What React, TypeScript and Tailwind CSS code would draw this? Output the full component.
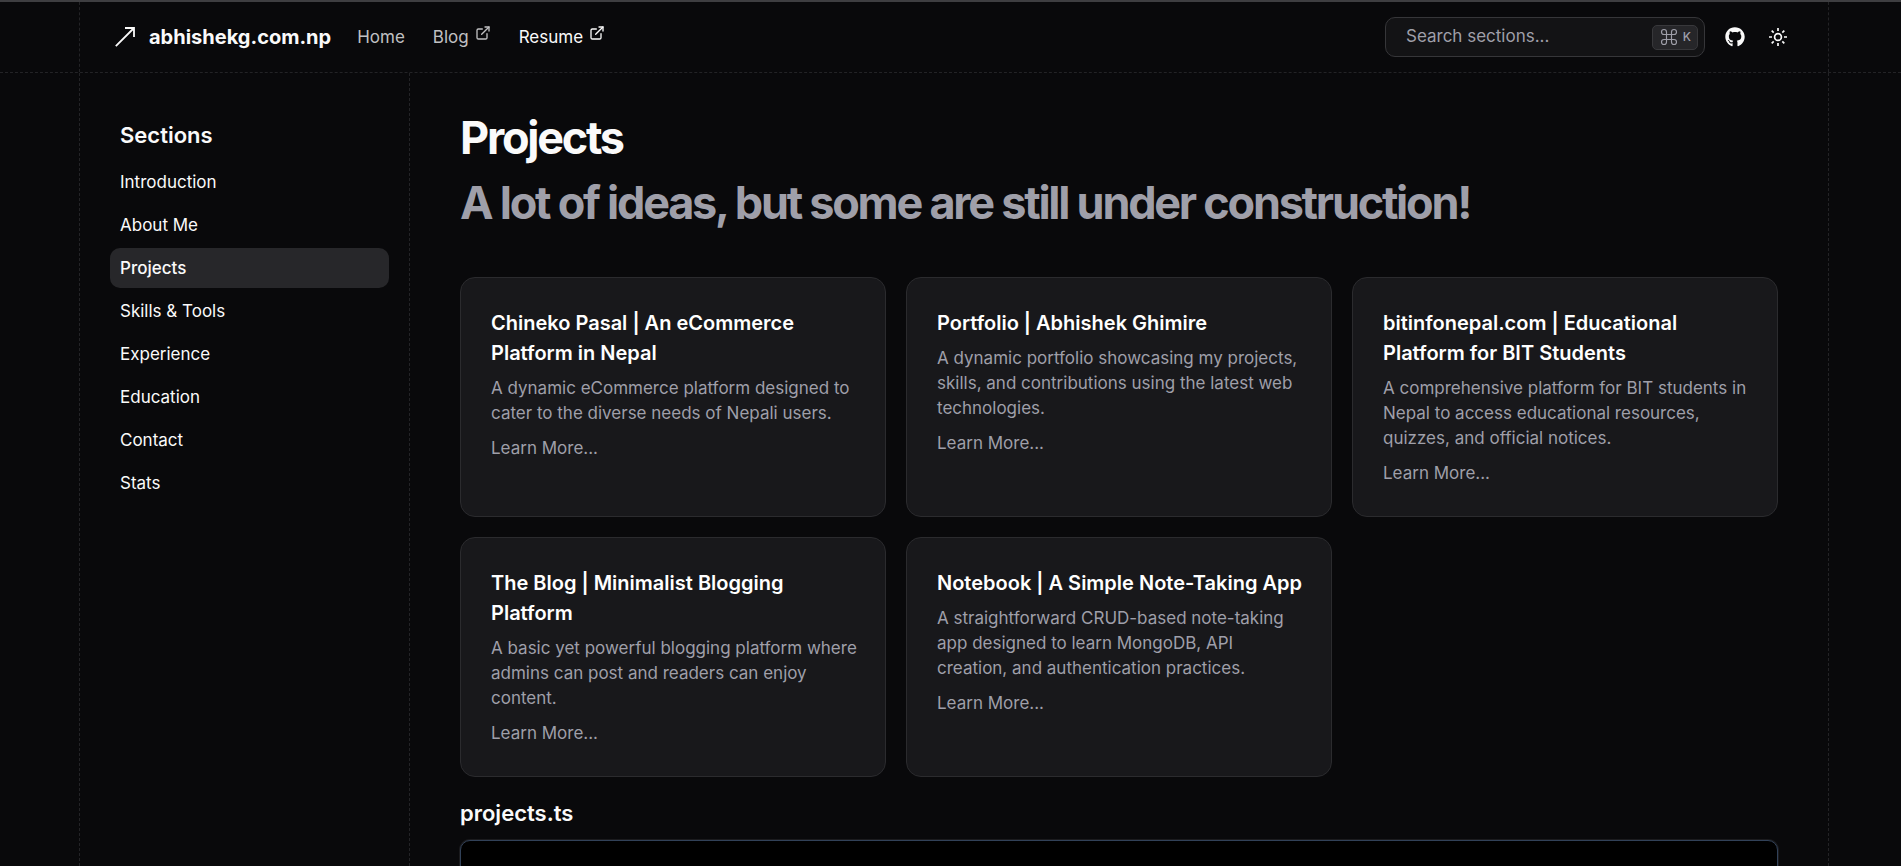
import { LuExternalLink } from "react-icons/lu";
import { FaGithub } from "react-icons/fa";
import { Command } from "lucide-react";

const sections = ["Introduction", "About Me", "Projects", "Skills & Tools", "Experience", "Education", "Contact", "Stats"];

const projects = [
  {
    title: "Chineko Pasal | An eCommerce Platform in Nepal",
    text: "A dynamic eCommerce platform designed to cater to the diverse needs of Nepali users.",
  },
  {
    title: "Portfolio | Abhishek Ghimire",
    text: "A dynamic portfolio showcasing my projects, skills, and contributions using the latest web technologies.",
  },
  {
    title: "bitinfonepal.com | Educational Platform for BIT Students",
    text: "A comprehensive platform for BIT students in Nepal to access educational resources, quizzes, and official notices.",
  },
  {
    title: "The Blog | Minimalist Blogging Platform",
    text: "A basic yet powerful blogging platform where admins can post and readers can enjoy content.",
  },
  {
    title: "Notebook | A Simple Note-Taking App",
    text: "A straightforward CRUD-based note-taking app designed to learn MongoDB, API creation, and authentication practices.",
  },
];

function LogoArrow() {
  return (
    <svg viewBox="0 0 24 24" fill="none" stroke="currentColor" strokeWidth="1.8" className="size-6" aria-hidden="true">
      <path d="M2.8 21.2 21 3M12 3h9v9" />
    </svg>
  );
}

function Sun() {
  return (
    <svg viewBox="0 0 20 20" fill="none" stroke="currentColor" strokeWidth="1.7" className="size-5" aria-hidden="true">
      <circle cx="10" cy="10" r="3.4" />
      <path d="M10 1v3M10 16v3M1 10h3M16 10h3M3.7 3.7l2 2M14.3 14.3l2 2M3.7 16.3l2-2M14.3 5.7l2-2" />
    </svg>
  );
}

function Header() {
  return (
    <header className="border-b border-dashed border-[#232326] pl-[7px]">
      <div className="mx-auto flex h-[70px] max-w-[1750px] items-center justify-between border-x border-dashed border-[#232326] pr-10 pl-[33px]">
        <nav className="flex items-center text-[17px] leading-6">
          <a href="#home" className="flex items-center gap-3 text-xl font-bold text-zinc-50">
            <LogoArrow />
            abhishekg.com.np
          </a>
          <a href="#home" className="ml-[26px] text-[#c0c0c2]">Home</a>
          <a href="#blog" className="ml-7 flex gap-1.5 text-[#c0c0c2]">
            Blog <LuExternalLink className="size-4" />
          </a>
          <a href="#resume" className="ml-7 flex gap-1.5 text-zinc-50">
            Resume <LuExternalLink className="size-4" />
          </a>
        </nav>
        <div className="flex items-center">
          <button type="button" className="flex h-10 w-80 items-center justify-between rounded-[10px] border border-[#363639] bg-[#131315] pr-1.5 pl-5 text-[17px] text-zinc-400">
            Search sections...
            <kbd className="flex h-[25px] items-center gap-1 rounded-[5px] border border-[#38383b] bg-[#262629] px-1.5 font-[Inter,sans-serif] text-[12px] font-medium">
              <Command className="size-5" strokeWidth={1.4} />K
            </kbd>
          </button>
          <a href="#github" aria-label="GitHub" className="ml-5 text-zinc-50">
            <FaGithub className="size-5" />
          </a>
          <button type="button" aria-label="Toggle theme" className="ml-[23px] text-zinc-50">
            <Sun />
          </button>
        </div>
      </div>
    </header>
  );
}

function Sidebar() {
  return (
    <aside className="w-[330px] shrink-0 border-r border-dashed border-[#232326] pt-[42px] pr-5 pl-[30px]">
      <h2 className="mb-[7px] px-2.5 text-[22px] leading-[40px] font-semibold text-zinc-50">Sections</h2>
      <ul className="flex flex-col gap-[3px]">
        {sections.map((name) => (
          <li key={name}>
            <a
              href={"#" + name}
              className={
                name === "Projects"
                  ? "block rounded-[10px] bg-[#27272a] px-2.5 text-[17px] leading-[40px] font-medium text-zinc-50"
                  : "block rounded-[10px] px-2.5 text-[17px] leading-[40px] text-zinc-50"
              }
            >
              {name}
            </a>
          </li>
        ))}
      </ul>
    </aside>
  );
}

export default function App() {
  return (
    <div className="flex h-screen flex-col overflow-hidden border-t-2 border-[#3e3e41] bg-[#09090b] font-[Inter,sans-serif] text-zinc-50">
      <Header />
      <div className="flex min-h-0 flex-1 pl-[7px]">
        <div className="mx-auto flex w-full max-w-[1750px] border-x border-dashed border-[#232326]">
          <Sidebar />
          <main className="min-w-0 flex-1 pt-8 pr-[50px] pl-[50px]">
            <h1 className="text-[45px] leading-[65px] font-bold tracking-tighter">Projects</h1>
            <p className="text-[45px] leading-[65px] font-bold tracking-tighter text-zinc-400">
              A lot of ideas, but some are still under construction!
            </p>
            <div className="mt-[42px] grid grid-cols-3 gap-5">
              {projects.map((p) => (
                <article key={p.title} className="rounded-[15px] border border-[#2b2b2e] bg-[#18181b] py-[30px] pr-6 pl-[30px] text-[17px] leading-[25px] text-zinc-400">
                  <h2 className="text-xl leading-[30px] font-semibold text-white">{p.title}</h2>
                  <p className="mt-2">{p.text}</p>
                  <a href="#project" className="mt-2.5 block">Learn More...</a>
                </article>
              ))}
            </div>
            <h2 className="mt-5 text-[22px] leading-[32px] font-semibold">projects.ts</h2>
            <div className="mt-[11px] h-[400px] rounded-[10px] border border-slate-700 bg-black shadow-[0_0_0_1px_#1b1b1e]" />
          </main>
        </div>
      </div>
    </div>
  );
}
